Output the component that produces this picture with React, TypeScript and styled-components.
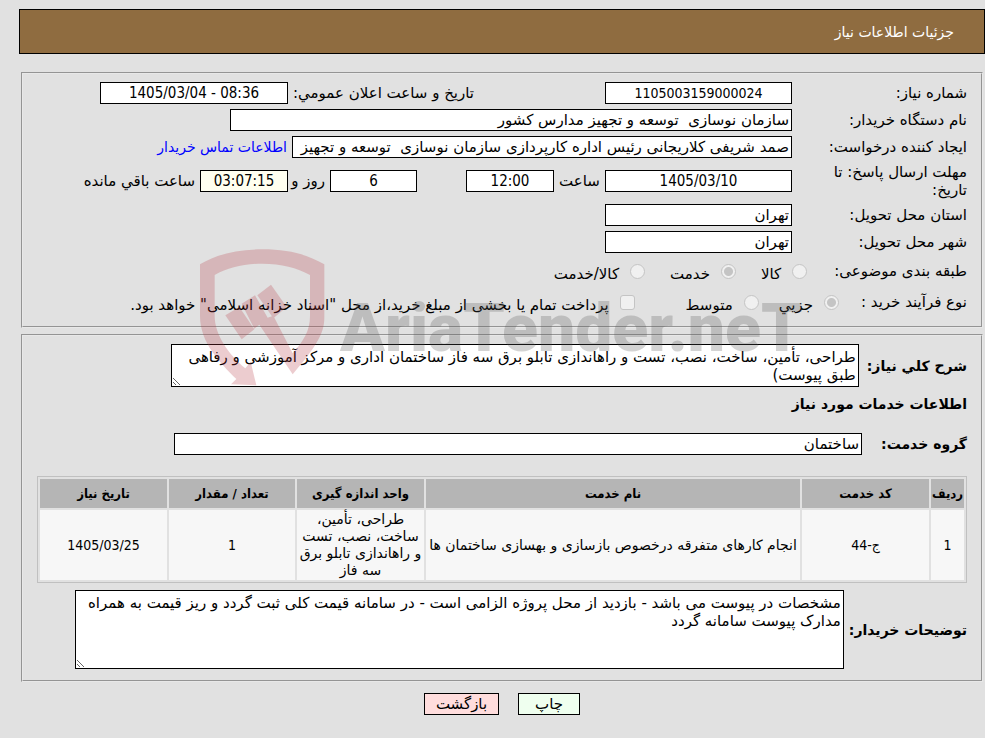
import React, { useState } from "react";
import styled, { createGlobalStyle } from "styled-components";

const condensed = `"DejaVu Sans Condensed", "DejaVu Sans", sans-serif`;

const GlobalStyle = createGlobalStyle`
  * { box-sizing: border-box; }
  body {
    margin: 0;
    background: #e1e1e1;
    color: #000;
    font-family: "DejaVu Sans", sans-serif;
    font-size: 15px;
    line-height: 18px;
  }
  input, textarea, button { font: inherit; color: inherit; }
`;

const Page = styled.main`
  position: relative;
  direction: rtl;
  padding: 9px 0 22px 19px;
`;

const TitleBar = styled.header`
  display: flex;
  align-items: center;
  height: 45px;
  padding: 0 30px;
  border: 1px solid #000;
  background: #8f6c40;
`;

const Title = styled.h1`
  margin: 0;
  color: #fff;
  font-size: 14px;
  font-weight: normal;
`;

const Panel = styled.fieldset<{ $top: number }>`
  display: flex;
  flex-direction: column;
  min-width: 0;
  margin: ${(p) => p.$top}px 2px 0;
  padding: 8px 14px 11px;
  border: 2px groove #e8e8e8;
`;

const Rows = styled.div`
  display: flex;
  flex-direction: column;
  gap: 5px;
`;

const Row = styled.div`
  display: flex;
  align-items: center;
  gap: 5px;
`;

const Label = styled.label`
  flex: none;
  width: 170px;
  padding-left: 30px;
`;

const InlineLabel = styled.label<{ $width?: number }>`
  flex: none;
  width: ${(p) => (p.$width ? `${p.$width}px` : "auto")};
  text-align: left;
  white-space: nowrap;
`;

const Field = styled.input<{ $width: number; $gap?: number; $tint?: string }>`
  flex: none;
  width: ${(p) => p.$width}px;
  height: 22px;
  margin: 0;
  margin-right: ${(p) => p.$gap ?? 0}px;
  padding: 1px 2px;
  border: 1px solid #000;
  border-radius: 0;
  background: ${(p) => p.$tint ?? "#fff"};
  outline: none;
`;

const NumberField = styled(Field)<{ $size?: number }>`
  font-family: ${condensed};
  font-size: ${(p) => p.$size ?? 15}px;
  text-align: center;
`;

const ContactLink = styled.a`
  color: #00f;
  font-size: 14px;
  text-decoration: none;
  white-space: nowrap;
`;

const OptionRow = styled.div`
  display: flex;
  align-items: center;
  height: 26px;
`;

const Caption = styled.span<{ $gap: number }>`
  margin-left: ${(p) => p.$gap}px;
`;

const Option = styled.label<{ $after: number }>`
  display: flex;
  align-items: center;
  gap: 11px;
  margin-left: ${(p) => p.$after}px;
  white-space: nowrap;
`;

const OptionText = styled.span`
  padding-top: 5px;
`;

const Mark = styled.input`
  appearance: none;
  flex: none;
  width: 15px;
  height: 15px;
  margin: 0;
  border: 1px solid #c4c4c4;
  border-radius: ${(p) => (p.type === "radio" ? "50%" : "3px")};
  background: #f0f0f0;
  &:checked {
    background: radial-gradient(circle, #c4c4c4 4px, #f0f0f0 5px);
  }
`;

const StrongLabel = styled.label<{ $gap: number }>`
  flex: none;
  margin-left: ${(p) => p.$gap}px;
  font-size: 14px;
  font-weight: bold;
`;

const StrongRow = styled.div<{ $top: number }>`
  display: flex;
  align-items: center;
  margin-top: ${(p) => p.$top}px;
`;

const Heading = styled.h2`
  margin: 8px 0 0;
  font-size: 14px;
  font-weight: bold;
  line-height: 18px;
`;

const Area = styled.textarea<{ $width: number; $height: number }>`
  display: block;
  width: ${(p) => p.$width}px;
  height: ${(p) => p.$height}px;
  margin: 0;
  padding: 3px 2px;
  border: 1px solid #000;
  background: #fff;
  overflow: hidden;
  outline: none;
`;

const Table = styled.table`
  width: 100%;
  margin: 21px 0 7px;
  border: 1px solid #c0c0c0;
  border-collapse: separate;
  border-spacing: 2px;
  table-layout: fixed;
  font-size: 14px;
  line-height: 17px;
  text-align: center;
`;

const Th = styled.th<{ $width?: number }>`
  width: ${(p) => (p.$width ? `${p.$width}px` : "auto")};
  height: 29px;
  padding: 0;
  background: #b5b5b5;
  font-family: ${condensed};
  font-size: 13px;
  white-space: nowrap;
`;

const Td = styled.td<{ $numeric: boolean }>`
  height: 70px;
  padding: 1px 0;
  background: #f7f7f7;
  font-family: ${(p) => (p.$numeric ? condensed : "inherit")};
`;

const Actions = styled.div`
  display: flex;
  justify-content: center;
  gap: 19px;
  margin-top: 11px;
`;

const ActionButton = styled.button<{ $tint: string; $width: number }>`
  width: ${(p) => p.$width}px;
  height: 22px;
  padding: 0;
  border: 1px solid #000;
  background: ${(p) => p.$tint};
`;

const Watermark = styled.div`
  position: absolute;
  top: 249px;
  left: 200px;
  display: flex;
  direction: ltr;
  gap: 14px;
  opacity: 0.25;
  pointer-events: none;
`;

const WordMark = styled.span`
  padding-top: 36px;
  color: #555;
  font-family: Roboto, sans-serif;
  font-size: 66px;
  font-weight: 900;
  line-height: 88px;
`;

const Shield = () => (
  <svg width="126" height="138" viewBox="30 29 378 414" fill="#b83a44" aria-hidden="true">
    <path d="M30 75C80 45 140 30 216 30C295 30 350 45 403 75V235C403 285 375 325 308 405L208 256L193 268L155 193L195 168L233 235L250 229L308 342C340 305 360 275 360 230V107C320 85 275 73 217 73C160 73 115 85 74 107V230C74 285 115 345 166 387L182 367L199 438L123 435L139 419C90 370 30 310 30 230Z" />
    <path d="M202 168L243 136L290 203L250 237Z" />
    <path d="M106 228L148 203L193 270L155 300Z" />
  </svg>
);

const columns = [
  { title: "ردیف", width: 33 },
  { title: "کد خدمت", width: 127 },
  { title: "نام خدمت" },
  { title: "واحد اندازه گیری", width: 127 },
  { title: "تعداد / مقدار", width: 126 },
  { title: "تاریخ نیاز", width: 127 },
];

const services = [
  [
    "1",
    "ج-44",
    "انجام کارهای متفرقه درخصوص بازسازی و بهسازی ساختمان ها",
    "طراحی، تأمین، ساخت، نصب، تست و راهاندازی تابلو برق سه فاز",
    "1",
    "1405/03/25",
  ],
];

export default function App() {
  const [summary, setSummary] = useState(
    "طراحی، تأمین، ساخت، نصب، تست و راهاندازی تابلو برق سه فاز ساختمان اداری و مرکز آموزشی و رفاهی طبق پیوست)"
  );
  const [notes, setNotes] = useState(
    "مشخصات در پیوست می باشد - بازدید از محل پروژه الزامی است - در سامانه قیمت کلی ثبت گردد و ریز قیمت به همراه مدارک پیوست سامانه گردد"
  );

  return (
    <Page lang="fa">
      <GlobalStyle />
      <TitleBar>
        <Title>جزئیات اطلاعات نیاز</Title>
      </TitleBar>

      <Panel $top={18}>
        <Rows>
          <Row>
            <Label htmlFor="number">شماره نیاز:</Label>
            <NumberField id="number" $width={187} $size={14} readOnly value="1105003159000024" />
            <InlineLabel htmlFor="announced" $width={307}>تاریخ و ساعت اعلان عمومي:</InlineLabel>
            <NumberField id="announced" $width={188} readOnly dir="ltr" value="1405/03/04 - 08:36" />
          </Row>
          <Row>
            <Label htmlFor="buyer">نام دستگاه خریدار:</Label>
            <Field id="buyer" $width={562} readOnly value="سازمان نوسازی  توسعه و تجهیز مدارس کشور" />
          </Row>
          <Row>
            <Label htmlFor="creator">ایجاد کننده درخواست:</Label>
            <Field
              id="creator"
              $width={500}
              readOnly
              value="صمد شریفی کلاریجانی رئیس اداره کارپردازی سازمان نوسازی  توسعه و تجهیز مدارس کشور"
            />
            <ContactLink href="#contact">اطلاعات تماس خریدار</ContactLink>
          </Row>
          <Row>
            <Label htmlFor="deadline">مهلت ارسال پاسخ: تا تاریخ:</Label>
            <NumberField id="deadline" $width={187} readOnly value="1405/03/10" />
            <InlineLabel htmlFor="hour" $width={41}>ساعت</InlineLabel>
            <NumberField id="hour" $width={88} readOnly value="12:00" />
            <NumberField id="days" $width={87} $gap={44} readOnly value="6" />
            <InlineLabel htmlFor="days" $width={32}>روز و</InlineLabel>
            <NumberField id="left" $width={88} $tint="#fffff0" readOnly value="03:07:15" />
            <InlineLabel htmlFor="left">ساعت باقي مانده</InlineLabel>
          </Row>
          <Row>
            <Label htmlFor="province">استان محل تحویل:</Label>
            <Field id="province" $width={187} readOnly value="تهران" />
          </Row>
          <Row>
            <Label htmlFor="city">شهر محل تحویل:</Label>
            <Field id="city" $width={187} readOnly value="تهران" />
          </Row>
          <OptionRow role="radiogroup" aria-label="طبقه بندی موضوعی">
            <Caption $gap={27}>طبقه بندی موضوعی:</Caption>
            <Option $after={25}><Mark type="radio" name="kind" disabled /><OptionText>کالا</OptionText></Option>
            <Option $after={25}><Mark type="radio" name="kind" disabled defaultChecked /><OptionText>خدمت</OptionText></Option>
            <Option $after={0}><Mark type="radio" name="kind" disabled /><OptionText>کالا/خدمت</OptionText></Option>
          </OptionRow>
          <OptionRow role="group" aria-label="نوع فرآیند خرید">
            <Caption $gap={22}>نوع فرآیند خرید :</Caption>
            <Option $after={20}><Mark type="radio" name="process" disabled defaultChecked /><OptionText>جزیي</OptionText></Option>
            <Option $after={51}><Mark type="radio" name="process" disabled /><OptionText>متوسط</OptionText></Option>
            <Option $after={0}>
              <Mark type="checkbox" disabled />
              <OptionText>پرداخت تمام یا بخشی از مبلغ خرید،از محل "اسناد خزانه اسلامی" خواهد بود.</OptionText>
            </Option>
          </OptionRow>
        </Rows>
      </Panel>

      <Panel $top={6}>
        <StrongRow $top={0}>
          <StrongLabel htmlFor="summary" $gap={8}>شرح کلي نیاز:</StrongLabel>
          <Area id="summary" $width={688} $height={43} value={summary} onChange={(e) => setSummary(e.target.value)} />
        </StrongRow>
        <Heading>اطلاعات خدمات مورد نیاز</Heading>
        <StrongRow $top={20}>
          <StrongLabel htmlFor="group" $gap={19}>گروه خدمت:</StrongLabel>
          <Field id="group" $width={688} readOnly value="ساختمان" />
        </StrongRow>
        <Table>
          <thead>
            <tr>
              {columns.map((c) => (
                <Th key={c.title} $width={c.width} scope="col">{c.title}</Th>
              ))}
            </tr>
          </thead>
          <tbody>
            {services.map((cells) => (
              <tr key={cells[2]}>
                {cells.map((cell, i) => (
                  <Td key={i} $numeric={/\d/.test(cell)}>{cell}</Td>
                ))}
              </tr>
            ))}
          </tbody>
        </Table>
        <StrongRow $top={0}>
          <StrongLabel htmlFor="notes" $gap={5}>توضیحات خریدار:</StrongLabel>
          <Area id="notes" $width={769} $height={79} value={notes} onChange={(e) => setNotes(e.target.value)} />
        </StrongRow>
      </Panel>

      <Actions>
        <ActionButton type="button" $tint="#efffef" $width={62}>چاپ</ActionButton>
        <ActionButton type="button" $tint="#ffdddd" $width={75}>بازگشت</ActionButton>
      </Actions>

      <Watermark aria-hidden="true">
        <Shield />
        <WordMark>AriaTender.neT</WordMark>
      </Watermark>
    </Page>
  );
}
